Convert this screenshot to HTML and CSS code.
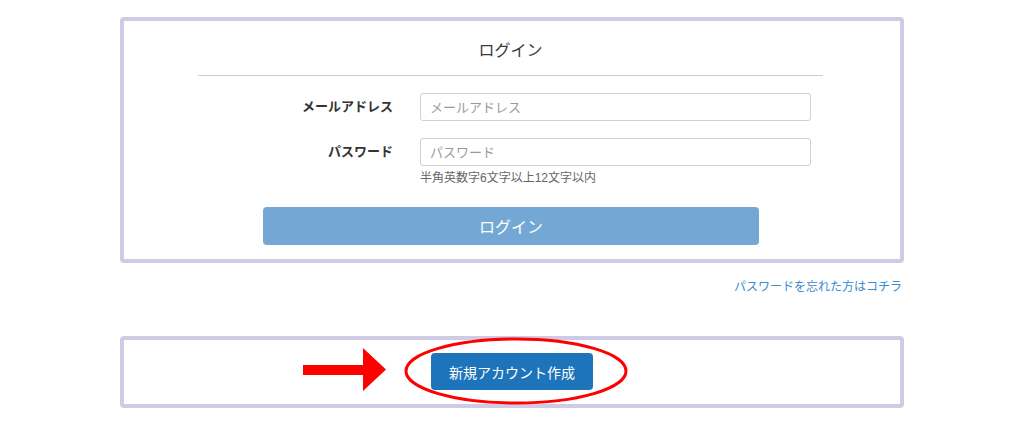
FILE: index.html
```html
<!DOCTYPE html>
<html lang="ja">
<head>
    <meta charset="UTF-8">
    <meta name="viewport" content="width=device-width, initial-scale=1.0">
    <title>ログイン</title>
    <link rel="stylesheet" href="styles.css">
</head>
<body>

    <div class="card login-card">
        <h1 class="title">ログイン</h1>

        <form class="login-form">
            <label class="form-label" for="email">メールアドレス</label>
            <input type="text" id="email" class="form-input" placeholder="メールアドレス">

            <label class="form-label" for="password">パスワード</label>
            <div class="form-field">
                <input type="password" id="password" class="form-input" placeholder="パスワード">
                <p class="help-text">半角英数字6文字以上12文字以内</p>
            </div>

            <button type="button" class="login-btn">ログイン</button>
        </form>
    </div>

    <div class="link-row">
        <a href="#" class="forgot-link">パスワードを忘れた方はコチラ</a>
    </div>

    <div class="card signup-card">
        <svg class="arrow" width="83" height="43" viewBox="0 0 83 43">
            <rect x="0" y="17" width="62" height="10" fill="#ff0000"/>
            <polygon points="60,0 83,21.5 60,43" fill="#ff0000"/>
        </svg>
        <button type="button" class="signup-btn">新規アカウント作成</button>
        <svg class="circle" width="228" height="72" viewBox="0 0 228 72">
            <ellipse cx="113" cy="35" rx="110" ry="32" fill="none" stroke="#ff0000" stroke-width="3"/>
        </svg>
    </div>

</body>
</html>
```

FILE: styles.css
```css
body {
    margin: 0;
    padding-top: 17px;
    background-color: #fff;
    font-family: "Liberation Sans", "Noto Sans CJK JP", sans-serif;
    color: #333;
}
.card {
    box-sizing: border-box;
    width: 784px;
    margin: 0 auto;
    border: 4px solid #cfcbe5;
    border-radius: 4px;
    background-color: #fff;
}
.login-card {
    padding: 18px 77px 14px 74px;
}
.title {
    margin: 0;
    padding-bottom: 12px;
    border-bottom: 1px solid #bfd0e2;
    font-size: 16px;
    font-weight: normal;
    line-height: 24px;
    text-align: center;
    color: #3a3a3a;
}
.login-form {
    display: grid;
    grid-template-columns: 195px 391px;
    column-gap: 27px;
    row-gap: 17px;
    margin-top: 17px;
    align-items: start;
}
.form-label {
    font-size: 13px;
    font-weight: bold;
    line-height: 28px;
    text-align: right;
    color: #333;
}
.form-input {
    box-sizing: border-box;
    width: 100%;
    height: 28px;
    padding: 0 9px;
    border: 1px solid #d0d0d0;
    border-radius: 3px;
    font-family: inherit;
    font-size: 13px;
    color: #333;
}
.form-input::placeholder {
    color: #9a9a9a;
}
.help-text {
    margin: 3px 0 0;
    font-size: 12px;
    line-height: 18px;
    color: #666;
}
.login-btn {
    grid-column: 1 / 3;
    justify-self: center;
    width: 496px;
    height: 38px;
    margin-top: 3px;
    margin-left: 13px;
    border: none;
    border-radius: 4px;
    background-color: #72a8d3;
    color: #fff;
    font-family: inherit;
    font-size: 16px;
    cursor: pointer;
}
.link-row {
    width: 784px;
    margin: 14px auto 0;
    padding-right: 2px;
    box-sizing: border-box;
    text-align: right;
    line-height: 18px;
}
.forgot-link {
    font-size: 12px;
    color: #3b8bd0;
    text-decoration: none;
}
.signup-card {
    position: relative;
    margin-top: 40px;
    padding: 13px 0 14px;
    text-align: center;
}
.signup-btn {
    width: 162px;
    height: 37px;
    border: none;
    border-radius: 4px;
    background-color: #1e74ba;
    color: #fff;
    font-family: inherit;
    font-size: 14px;
    vertical-align: top;
    cursor: pointer;
}
.arrow {
    position: absolute;
    left: 179px;
    top: 8px;
}
.circle {
    position: absolute;
    left: 279px;
    top: -4px;
}
```
